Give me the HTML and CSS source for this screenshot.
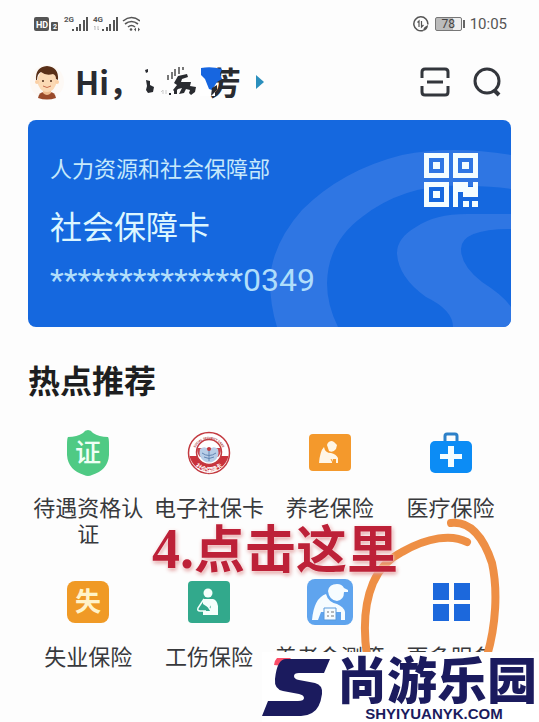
FILE: index.html
```html
<!DOCTYPE html>
<html lang="zh-CN">
<head>
<meta charset="utf-8">
<meta name="viewport" content="width=device-width, initial-scale=1">
<title>社会保障卡</title>
<link rel="stylesheet" href="styles.css">
</head>
<body>
<main class="page">
  <div class="status">
    <div class="status-side">
      <svg width="106" height="18" viewBox="0 0 106 18" aria-hidden="true">
        <rect x="0" y="2" width="15" height="14" rx="2" fill="#555"/>
        <text x="2" y="13" class="st-hd">HD</text>
        <rect x="17" y="7" width="7" height="9" rx="1" fill="#555"/>
        <text x="19" y="14" class="st-two">2</text>
        <text x="30" y="7" class="st-net">2G</text>
        <g fill="#555">
          <path d="M38 14h2v2h-2zM42 12h2v4h-2zM45 9h2v7h-2zM49 5h2v11h-2zM52 2h2v14h-2z"/>
          <path d="M68 14h2v2h-2zM72 12h2v4h-2zM75 9h2v7h-2zM79 5h2v11h-2zM82 2h2v14h-2z"/>
        </g>
        <text x="59" y="7" class="st-net">4G</text>
        <path d="M61 15v-4l-1 1M64 11v4l1-1" fill="none" stroke="#bbb"/>
        <g fill="none" stroke="#555" stroke-width="1.6">
          <path d="M89 6q8.500-7 17 0M91 9q6.500-5 13 0M94 12q3.500-3 7 0"/>
        </g>
        <circle cx="97" cy="14.500" r="1.300" fill="#555"/>
        <path d="M100 14.500l2-2v4zM106 14.500l-2-2v4z" fill="#555"/>
      </svg>
    </div>
    <div class="status-side">
      <svg width="16" height="16" viewBox="0 0 16 16" fill="none" stroke="#555" stroke-width="1.500" aria-hidden="true">
        <path d="M10 14.500A7 7 0 1 1 14.800 8.500"/>
        <path d="M6 11V5L4.500 6.500M8.500 5v6l2-2" stroke-width="1.200"/>
        <path d="M15 9q0 5-5 6q0-4 5-6z" fill="#555" stroke="none"/>
      </svg>
      <span class="battery">78</span>
      <time class="clock">10:05</time>
    </div>
  </div>

  <header class="header">
    <svg class="avatar" width="34" height="36" viewBox="0 0 34 36" aria-hidden="true">
      <circle cx="17" cy="18" r="17" fill="#fdf9f5"/>
      <path d="M8 34q1-6 6-6h6q5 0 6 6q-9 3-18 0z" fill="#9a4a2a"/>
      <path d="M13 26h8v3q-4 4-8 0z" fill="#f0bd90"/>
      <ellipse cx="17" cy="17" rx="9.500" ry="11" fill="#fbd9b4"/>
      <circle cx="7" cy="18" r="2" fill="#fbd0a5"/><circle cx="27" cy="18" r="2" fill="#fbd0a5"/>
      <path d="M6 16Q5 3 17 2q12 1 11 14l-2-1q0-4-3-5-7 2-12-2-4 2-4 8z" fill="#5a3018"/>
      <circle cx="13" cy="17" r="1" fill="#4b2a18"/><circle cx="21" cy="17" r="1" fill="#4b2a18"/>
      <path d="M13 22q4 3 8 0" fill="none" stroke="#c96f50"/>
    </svg>
    <h1 class="hello">Hi，</h1>
    <div class="name">
      <svg width="68" height="32" viewBox="0 0 68 32" aria-hidden="true">
        <g fill="#292b30">
          <path d="M4 4l3-1v3l-2 1zM5 14l4 1v4l4 2-1 5-5 1-2-3 1-4z"/>
          <path d="M37 10l9-2 1 3-6 2-1 3h10l-1 4 6 1-1 5-4 3-2-2 1-3-4-1-2 4-5 1 3-6-4 1-3 3-2-2 4-5-3-2z"/>
          <path d="M33 28v-4h3v4zM28 29v-2h2v2z"/>
        </g>
        <g stroke="#777" stroke-width="2"><path d="M27 14V9M31 13V6M34 10V3M38 8V1M42 4V1"/></g>
        <path d="M22 28v-4l-2 2M25 24v4" stroke="#ccc" fill="none"/>
      </svg>
      <span class="name-end">芳</span>
      <svg class="smear" width="26" height="32" viewBox="0 0 26 32" aria-hidden="true">
        <path d="M0 0h15v31H0z" fill="#fff"/>
        <path d="M1 3q10-2 21 1l-2 5 2 5-5 3-5 8-3-1-4-10-4-4z" fill="#1766e0"/>
        <path d="M12 23l5-3v5l-6 6z" fill="#292b30"/>
      </svg>
    </div>
    <svg class="caret" width="8" height="14" viewBox="0 0 8 14" aria-hidden="true"><path d="M0 0l8 7-8 7z" fill="#2b8fbd"/></svg>
    <div class="tools">
      <button class="tool" type="button" aria-label="扫一扫">
        <svg width="30" height="30" viewBox="0 0 30 30" fill="none" stroke="#33363c" stroke-width="3">
          <path d="M2 11V5q0-3 3-3h20q3 0 3 3v6M2 19v6q0 3 3 3h20q3 0 3-3v-6M7 15h16"/>
        </svg>
      </button>
      <button class="tool" type="button" aria-label="搜索">
        <svg width="30" height="30" viewBox="0 0 30 30" fill="none" stroke="#33363c" stroke-width="3">
          <circle cx="15" cy="14" r="12"/><path d="M22 23l5 5" stroke-width="4"/>
        </svg>
      </button>
    </div>
  </header>

  <section class="card">
    <svg class="card-art" viewBox="242 0 242 207" preserveAspectRatio="xMaxYMid slice" fill="#2f76e3" aria-hidden="true">
      <path d="M484 35Q425 25 375 35Q315 50 275 90Q245 124 243 160Q243 185 250 207H311Q300 185 300 163Q301 122 335 97Q380 62 442 66Q464 66 484 69Z"/>
      <path d="M484 94H440Q408 94 389 107Q370 118 370 133Q371 157 399 177Q426 190 426 207H484V187Q477 176 455 162Q434 146 434 129Q434 109 484 109Z"/>
    </svg>
    <div class="card-text">
      <p class="dept">人力资源和社会保障部</p>
      <h2 class="card-name">社会保障卡</h2>
      <p class="card-no">**************0349</p>
    </div>
    <button class="qr" type="button" aria-label="二维码">
      <svg width="54" height="54" viewBox="0 0 54 54" fill="#f4fdff">
        <path fill-rule="evenodd" d="M0 0h25v25H0zM5 5v15h15V5zM29 0h25v25H29zM34 5v15h15V5zM0 29h25v25H0zM5 34v15h15V34z"/>
        <path d="M9 9h7v7H9zM38 9h7v7h-7zM9 38h7v7H9z"/>
        <path d="M29 29h15v5h5v-5h5v15H39v-5h-5v15h-5zM39 48h6v6h-6zM48 48h6v6h-6z"/>
      </svg>
    </button>
  </section>

  <h2 class="title">热点推荐</h2>

  <nav class="grid">
    <a class="item" href="#">
      <svg width="48" height="48" viewBox="0 0 48 48" aria-hidden="true">
        <path d="M24 1q3 0 5 3 6 4 15 4 1 1 1 8v10q-1 15-17 20-4 2-8 0Q4 41 3 26V16q0-7 1-8 9 0 15-4 2-3 5-3z" fill="#4fca84"/>
        <text x="24" y="33" class="glyph shield">证</text>
      </svg>
      <span>待遇资格认证</span>
    </a>
    <a class="item" href="#">
      <svg width="48" height="48" viewBox="0 0 48 48" aria-hidden="true">
        <defs>
          <path id="arc-top" d="M9 25a15 15 0 0 1 30 0"/>
          <path id="arc-bottom" d="M5 24a19 19 0 0 0 38 0"/>
        </defs>
        <circle cx="24" cy="24" r="20.500" fill="#fff" stroke="#c33a40" stroke-width="1.500"/>
        <path d="M4.500 27h39A20 20 0 0 1 4.500 27z" fill="#c9333c"/>
        <circle cx="24" cy="23" r="12.500" fill="#fff" stroke="#c33a40" stroke-width="1.500"/>
        <path d="M12 19h24q0 6-3 9H15q-3-3-3-9z" fill="#c9444d"/>
        <path d="M15 20q5-4 9 1 4-5 9-1 2 8-4 12-5 3-10 0-6-4-4-12z" fill="#b8cde7"/>
        <path d="M17 24q7 5 14 0M19 28q5 3 10 0M24 21v11" fill="none" stroke="#6385b3"/>
        <circle cx="24" cy="20" r="2" fill="#c33a40"/>
        <text class="seal-en"><textPath href="#arc-top" startOffset="50%">SOCIAL SECURITY CARD</textPath></text>
        <text class="seal-cn"><textPath href="#arc-bottom" startOffset="50%">社会保障卡</textPath></text>
      </svg>
      <span>电子社保卡</span>
    </a>
    <a class="item" href="#">
      <svg width="48" height="48" viewBox="0 0 48 48" aria-hidden="true">
        <rect x="3" y="5" width="42" height="37" rx="4" fill="#f4992c"/>
        <g fill="#fff6e6">
          <path d="M21 16q1-4 5-4l2 1 3 3-1 4q-3 4-7 2z"/>
          <path d="M18 18q1 6 7 6 5 1 7 5v5h-2v-4h-3l-1 4H13q1-12 5-16z"/>
        </g>
        <path d="M25 30l2 4" stroke="#f4992c" fill="none"/>
      </svg>
      <span>养老保险</span>
    </a>
    <a class="item" href="#">
      <svg width="48" height="48" viewBox="0 0 48 48" aria-hidden="true">
        <path d="M18 14V7q0-2 2-2h8q2 0 2 2v7" fill="none" stroke="#2d80c8" stroke-width="3"/>
        <rect x="3" y="12" width="42" height="32" rx="5" fill="#0c8cf5"/>
        <path d="M21 17h6v8h8v5h-8v8h-6v-8h-8v-5h8z" fill="#f4fdff"/>
      </svg>
      <span>医疗保险</span>
    </a>
    <a class="item" href="#">
      <svg width="48" height="48" viewBox="0 0 48 48" aria-hidden="true">
        <rect x="3" y="3" width="42" height="42" rx="8" fill="#f09a26"/>
        <text x="24" y="33" class="glyph lost">失</text>
      </svg>
      <span>失业保险</span>
    </a>
    <a class="item" href="#">
      <svg width="48" height="48" viewBox="0 0 48 48" aria-hidden="true">
        <rect x="3" y="3" width="42" height="42" rx="4" fill="#32a98c"/>
        <circle cx="23" cy="15" r="4.500" fill="#f4fffb"/>
        <path d="M18 21h10q4 1 5 7v9H18v-4h7l2-7-3 4-6-4z" fill="#f4fffb"/>
        <path d="M19 21l-6 9q-1 3 2 3h6M19 22l7 11 1-11" fill="none" stroke="#f4fffb" stroke-width="1.500"/>
      </svg>
      <span>工伤保险</span>
    </a>
    <a class="item" href="#">
      <svg width="48" height="48" viewBox="0 0 48 48" aria-hidden="true">
        <rect x="1" y="1" width="46" height="46" rx="8" fill="#5fa4ee"/>
        <g fill="#f6fcff">
          <path d="M22 13q1-7 9-7 5 0 7 4l4 2v2h-4q0 8-7 9-8-1-9-10z"/>
          <path d="M20 16q2 8 11 10 7 3 8 8v8h-4v-8h-5v8H18v-8h-3l-3 8H6q2-22 14-26z"/>
        </g>
        <path d="M18 30h12v12H18z" fill="#f6fcff" stroke="#5b9bdc"/>
        <path d="M21 34h2M25 34h3M21 38h2M25 38h3" stroke="#777" fill="none"/>
      </svg>
      <span>养老金测算</span>
    </a>
    <a class="item" href="#">
      <svg width="48" height="48" viewBox="0 0 48 48" fill="#1c68dc" aria-hidden="true">
        <path d="M6 5h16v17H6zM27 5h16v17H27zM6 26h16v17H6zM27 26h16v17H27z"/>
      </svg>
      <span>更多服务</span>
    </a>
  </nav>

  <svg class="ring" width="150" height="150" viewBox="0 0 150 150" fill="none" stroke="#ee8f45" stroke-width="8" stroke-linecap="round" aria-hidden="true">
    <path d="M101 13C121 11 134 29 142 53C148 80 146 115 137 146"/>
    <path d="M117 32C102 24 78 27 52 42C38 49 29 59 23 73C15 92 13 118 17 146"/>
  </svg>
  <p class="callout"><span class="step">4.</span>点击这里</p>

  <aside class="mark">
    <svg width="69" height="62" viewBox="0 0 69 62" aria-hidden="true">
      <path d="M15 0h14l-8 8-9-1q0-4 3-7z" fill="#fb4d68"/>
      <path d="M24 1h44l-6 14H37q-5 0-5 3t5 4l16 3q8 2 7 11-2 15-10 19-5 3-11 3H0l6-15h30q6 0 6-3t-5-4l-16-3q-9-2-8-12Q15 1 24 1z" fill="#1b1b5e"/>
    </svg>
    <div class="mark-text">
      <strong class="mark-cn">尚游乐园</strong>
      <span class="mark-en">SHYIYUANYK.COM</span>
    </div>
  </aside>
</main>
</body>
</html>
```
FILE: styles.css
```css
* { box-sizing: border-box; }

body {
  margin: 0;
  background: #fdfdfd;
  color: #292b30;
  font-family: "Noto Sans CJK SC", sans-serif;
}

h1, h2, p { margin: 0; }

button {
  padding: 0;
  border: 0;
  background: none;
  display: flex;
}

.page {
  position: relative;
  min-height: 100vh;
  padding: 0 28px;
  overflow: hidden;
}

/* status bar */
.status {
  display: flex;
  justify-content: space-between;
  align-items: center;
  height: 48px;
  padding: 0 4px 0 6px;
}

.status-side {
  display: flex;
  align-items: center;
  gap: 6px;
}

.st-hd { font: bold 9px Roboto, sans-serif; fill: #fff; }
.st-two { font: bold 7px Roboto, sans-serif; fill: #fff; }
.st-net { font: bold 8px Roboto, sans-serif; fill: #555; }

.battery {
  position: relative;
  width: 27px;
  height: 14px;
  border: 1px solid #777;
  border-radius: 2px;
  background: linear-gradient(90deg, #bbb 70%, #eee 70%);
  color: #444;
  font: 12px/12px Roboto, sans-serif;
  text-align: center;
}

.battery::after {
  content: "";
  position: absolute;
  right: -4px;
  top: 2px;
  width: 2px;
  height: 8px;
  background: #666;
}

.clock {
  color: #555;
  font: 15px/20px Roboto, sans-serif;
  padding-left: 2px;
}

/* greeting */
.header {
  display: flex;
  align-items: center;
  height: 68px;
}

.avatar { margin: 0 11px 0 2px; }

.hello,
.name-end {
  font-size: 32px;
  line-height: 40px;
  padding-bottom: 2px;
  font-weight: 700;
}

.name {
  position: relative;
  display: flex;
  align-items: center;
}

.smear {
  position: absolute;
  right: 15px;
  top: 4px;
}

.caret { margin-left: 15px; }

.tools {
  display: flex;
  gap: 22px;
  margin-left: auto;
  padding-right: 9px;
}

/* card */
.card {
  position: relative;
  display: flex;
  justify-content: space-between;
  align-items: flex-start;
  margin-top: 4px;
  padding: 33px 33px 27px 22px;
  border-radius: 8px;
  background: #1568df;
  overflow: hidden;
}

.card-art {
  position: absolute;
  right: 0;
  top: 0;
  height: 100%;
}

.card-text, .qr { position: relative; }

.dept {
  color: #c6e8fb;
  font-size: 22px;
  line-height: 28px;
}

.card-name {
  margin-top: 22px;
  color: #dcf6ff;
  font-size: 32px;
  line-height: 44px;
  font-weight: 400;
}

.card-no {
  margin-top: 13px;
  color: #b0defb;
  font: 32px/40px Roboto, sans-serif;
}

/* services */
.title {
  margin-top: 30px;
  color: #1d1e20;
  font-size: 32px;
  line-height: 44px;
  font-weight: 700;
}

.grid {
  display: grid;
  grid-template-columns: repeat(4, 1fr);
  row-gap: 33px;
  margin-top: 28px;
}

.item {
  display: flex;
  flex-direction: column;
  align-items: center;
  gap: 16px;
  color: #38393c;
  font-size: 22px;
  line-height: 26px;
  font-weight: 400;
  text-align: center;
  text-decoration: none;
}

.glyph {
  font-size: 26px;
  text-anchor: middle;
  font-weight: 500;
}

.shield { fill: #effff5; }
.lost { fill: #fff3c9; font-weight: 700; }

.seal-en {
  font: bold 3px Roboto, sans-serif;
  fill: #a33;
  text-anchor: middle;
}

.seal-cn {
  font-size: 6px;
  font-weight: 700;
  fill: #fff;
  text-anchor: middle;
}

/* hand-drawn annotation */
.ring {
  position: absolute;
  left: 350px;
  top: 510px;
}

.callout {
  position: absolute;
  left: 152px;
  top: 516px;
  color: #bd2138;
  font-size: 51px;
  line-height: 60px;
  font-weight: 700;
  white-space: nowrap;
  text-shadow: 0 0 3px #fff, 1px 2px 4px #d88;
}

.step {
  font-family: "Liberation Serif", serif;
  font-size: 56px;
}

/* site mark */
.mark {
  position: absolute;
  right: 0;
  bottom: 0;
  display: flex;
  align-items: flex-start;
  gap: 6px;
  height: 70px;
  padding: 0 2px 0 0;
  background: #fff;
  color: #1b1b5e;
}

.mark svg { margin-top: 6px; }

.mark-text {
  display: flex;
  flex-direction: column;
  align-items: center;
}

.mark-cn {
  font-size: 50px;
  line-height: 50px;
  font-weight: 900;
}

.mark-en {
  padding-right: 6px;
  font: bold 15px/20px "Liberation Sans", sans-serif;
  margin-top: 2px;
}
```
